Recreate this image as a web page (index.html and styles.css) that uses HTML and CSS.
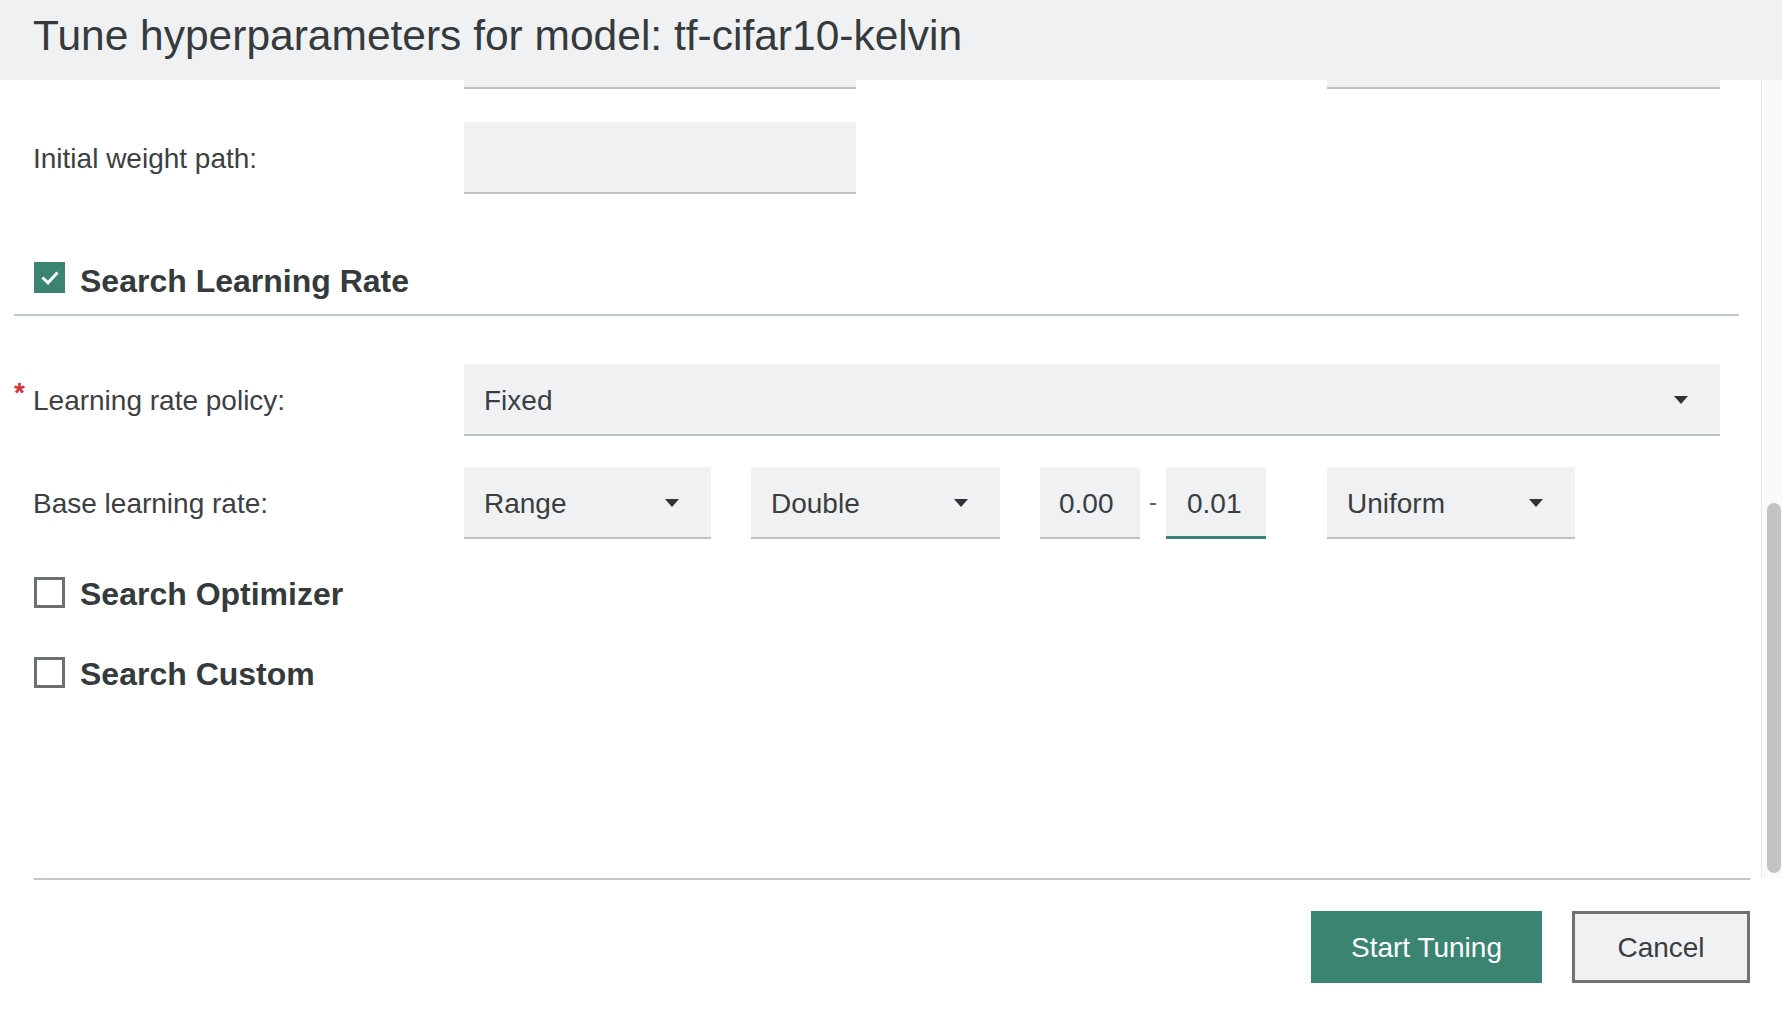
FILE: index.html
```html
<!DOCTYPE html>
<html>
<head>
<meta charset="utf-8">
<link rel="stylesheet" href="styles.css">
</head>
<body>
<div class="modal">
  <header class="modal-header">
    <h1 class="title">Tune hyperparameters for model: tf-cifar10-kelvin</h1>
  </header>
  <div class="modal-body">
    <div class="scroll-content">
      <div class="scroll-inner">
        <div class="form-row">
          <div class="label"></div>
          <div class="field w392"></div>
          <div class="label label-mid"></div>
          <div class="field w393"></div>
        </div>
        <div class="form-row row-gap">
          <div class="label"><span class="req"></span><span>Initial weight path:</span></div>
          <div class="field w392"></div>
        </div>

        <div class="section-head">
          <span class="checkbox checked">
            <svg viewBox="0 0 30 30" width="30" height="30"><path d="M8.5 15.5 L13 19.8 L21.5 10.5" fill="none" stroke="#fff" stroke-width="3" stroke-linecap="square"/></svg>
          </span>
          <span class="section-title">Search Learning Rate</span>
        </div>

        <div class="form-row policy-row">
          <div class="label"><span class="req">*</span><span>Learning rate policy:</span></div>
          <div class="field select wide"><span>Fixed</span><span class="caret"></span></div>
        </div>

        <div class="form-row base-row">
          <div class="label"><span class="req"></span><span>Base learning rate:</span></div>
          <div class="controls">
            <div class="field select w247"><span>Range</span><span class="caret"></span></div>
            <div class="field select w249"><span>Double</span><span class="caret"></span></div>
            <div class="range">
              <div class="field num"><span class="clip">0.001</span></div>
              <span class="dash">-</span>
              <div class="field num focused"><span class="clip">0.01</span></div>
            </div>
            <div class="field select w248"><span>Uniform</span><span class="caret"></span></div>
          </div>
        </div>

        <div class="check-row first">
          <span class="checkbox"></span>
          <span class="section-title">Search Optimizer</span>
        </div>
        <div class="check-row second">
          <span class="checkbox"></span>
          <span class="section-title">Search Custom</span>
        </div>
      </div>
    </div>
    <div class="scrollbar">
      <div class="thumb"></div>
    </div>
  </div>
  <footer class="modal-footer">
    <button class="btn primary">Start Tuning</button>
    <button class="btn secondary">Cancel</button>
  </footer>
</div>
</body>
</html>
```
FILE: styles.css
```css
html, body {
  margin: 0;
  padding: 0;
  background: #ffffff;
}
body {
  font-family: "Liberation Sans", Arial, Helvetica, sans-serif;
  color: #3a3e40;
  width: 1782px;
  height: 1014px;
  overflow: hidden;
}
.modal {
  display: flex;
  flex-direction: column;
  height: 1014px;
}
.modal-header {
  height: 80px;
  background: #f0f1f3;
  display: flex;
  align-items: center;
  padding-left: 33px;
  box-sizing: border-box;
  padding-bottom: 8px;
}
.title {
  margin: 0;
  font-weight: normal;
  font-size: 42.5px;
  color: #353a3c;
  white-space: nowrap;
}
.modal-body {
  display: flex;
  height: 798px;
}
.scroll-content {
  flex: 1;
  overflow: hidden;
  padding: 0 22px 0 14px;
}
.scroll-inner {
  margin-top: -63px;
}
.form-row {
  display: flex;
  align-items: center;
  height: 72px;
}
.row-gap {
  margin-top: 33px;
}
.label {
  width: 450px;
  display: flex;
  align-items: center;
  font-size: 28px;
  color: #3c4042;
  white-space: nowrap;
  padding-top: 2px;
  box-sizing: border-box;
}
.label-mid {
  width: 471px;
}
.req {
  width: 19px;
  color: #d8323c;
  font-size: 28px;
  font-weight: bold;
  align-self: flex-start;
  margin-top: -6px;
  line-height: 1;
}
.field {
  height: 72px;
  box-sizing: border-box;
  background: #f0f1f3;
  border-bottom: 2px solid #bcc4c3;
  display: flex;
  align-items: center;
  padding: 3px 20px 0;
  font-size: 28px;
  color: #3a3e40;
}
.w392 { width: 392px; }
.w393 { width: 393px; }
.w247 { width: 247px; }
.w249 { width: 249px; }
.w248 { width: 248px; }
.wide { width: 1256px; }
.select {
  justify-content: space-between;
  padding-right: 32px;
}
.caret {
  width: 0;
  height: 0;
  border-left: 7px solid transparent;
  border-right: 7px solid transparent;
  border-top: 8px solid #2f3335;
  margin-top: -2px;
}
.controls {
  display: flex;
  align-items: center;
  gap: 40px;
}
.range {
  display: flex;
  align-items: center;
  margin-right: 21px;
}
.num {
  width: 100px;
  padding-left: 19px;
  padding-right: 0;
}
.clip {
  display: block;
  width: 56px;
  overflow: hidden;
  white-space: nowrap;
}
.focused {
  border-bottom: 3px solid #3a8471;
  padding-left: 21px;
  padding-top: 4px;
}
.dash {
  width: 26px;
  text-align: center;
  font-size: 24px;
  color: #5a5e60;
  margin-top: -2px;
}
.section-head {
  margin-top: 50px;
  height: 70px;
  border-bottom: 2px solid #c1c9c8;
  display: flex;
  align-items: center;
  padding-left: 20px;
}
.policy-row {
  margin-top: 48px;
}
.base-row {
  margin-top: 31px;
}
.checkbox {
  width: 31px;
  height: 31px;
  box-sizing: border-box;
  border: 3px solid #6b7071;
  background: #fff;
  display: inline-flex;
  align-items: center;
  justify-content: center;
  flex: none;
}
.checkbox.checked {
  border: none;
  background: #3a8471;
  margin-top: -3px;
}
.section-title {
  font-weight: bold;
  font-size: 32px;
  color: #353a3c;
  margin-left: 15px;
  white-space: nowrap;
  padding-top: 4px;
}
.check-row {
  display: flex;
  align-items: center;
  height: 50px;
  padding-left: 20px;
}
.check-row.first { margin-top: 28px; }
.check-row.second { margin-top: 30px; }
.scrollbar {
  width: 21px;
  box-sizing: border-box;
  border-left: 1px solid #e4e5e6;
  background: #fafafa;
  padding: 423px 0 0 5px;
}
.thumb {
  width: 14px;
  height: 370px;
  border-radius: 7px;
  background: #c3c3c3;
}
.modal-footer {
  margin: 0 32px 0 34px;
  border-top: 2px solid #c1c9c8;
  display: flex;
  justify-content: flex-end;
  gap: 30px;
  padding-top: 31px;
}
.btn {
  height: 72px;
  font-family: "Liberation Sans", Arial, Helvetica, sans-serif;
  font-size: 28px;
  box-sizing: border-box;
  margin: 0;
  cursor: pointer;
  padding-top: 2px;
}
.primary {
  width: 231px;
  background: #3b8472;
  color: #ffffff;
  border: none;
}
.secondary {
  width: 178px;
  background: #f0f1f3;
  color: #3a3e40;
  border: 3px solid #6f7473;
}
```
